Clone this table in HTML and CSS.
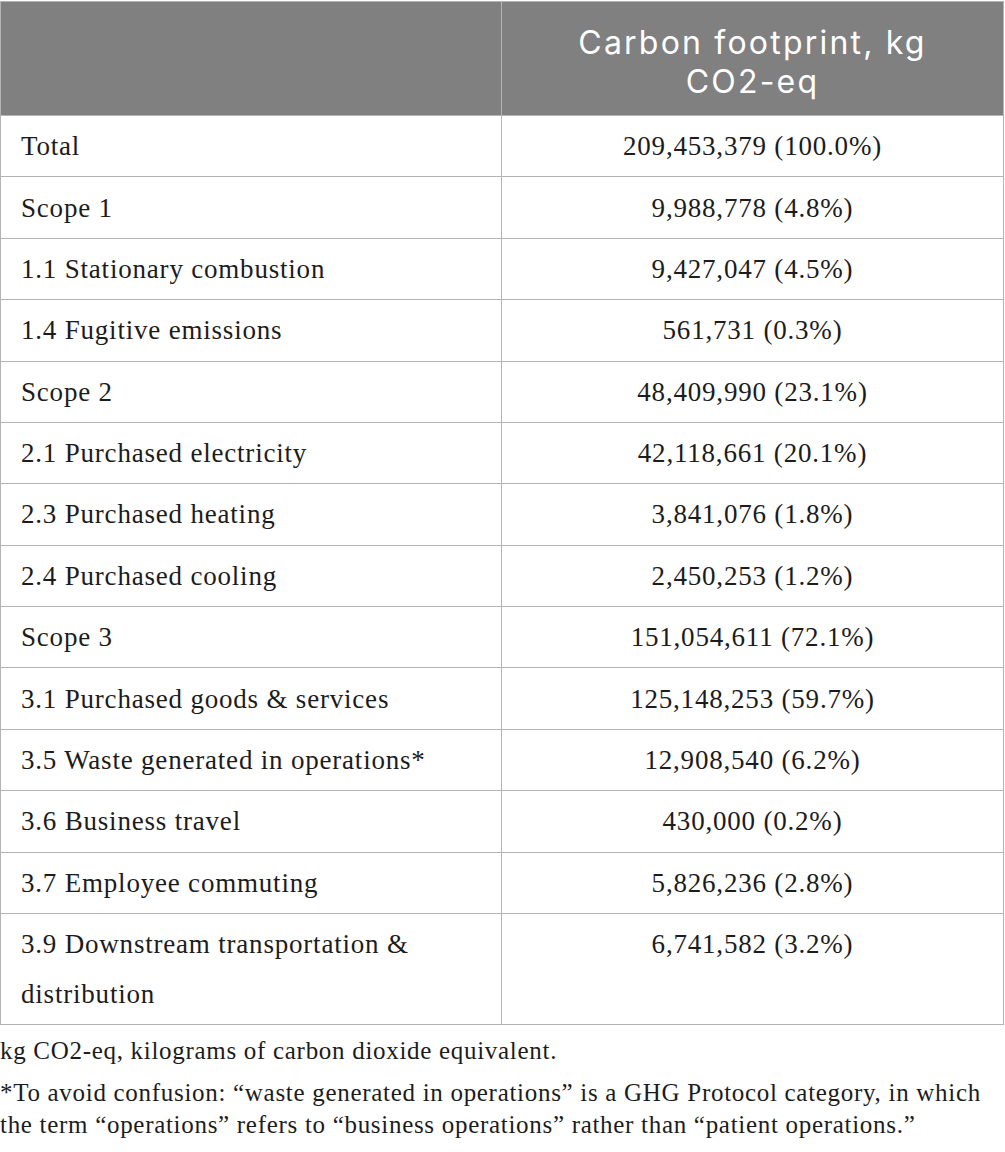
FILE: index.html
```html
<!DOCTYPE html>
<html>
<head>
<meta charset="utf-8">
<link rel="stylesheet" href="styles.css">
</head>
<body>
<table class="data">
  <thead>
    <tr>
      <th class="blank"></th>
      <th class="head">Carbon footprint, kg<br>CO2-eq</th>
    </tr>
  </thead>
  <tbody>
    <tr><td>Total</td><td class="num">209,453,379 (100.0%)</td></tr>
    <tr><td>Scope 1</td><td class="num">9,988,778 (4.8%)</td></tr>
    <tr><td>1.1 Stationary combustion</td><td class="num">9,427,047 (4.5%)</td></tr>
    <tr><td>1.4 Fugitive emissions</td><td class="num">561,731 (0.3%)</td></tr>
    <tr><td>Scope 2</td><td class="num">48,409,990 (23.1%)</td></tr>
    <tr><td>2.1 Purchased electricity</td><td class="num">42,118,661 (20.1%)</td></tr>
    <tr><td>2.3 Purchased heating</td><td class="num">3,841,076 (1.8%)</td></tr>
    <tr><td>2.4 Purchased cooling</td><td class="num">2,450,253 (1.2%)</td></tr>
    <tr><td>Scope 3</td><td class="num">151,054,611 (72.1%)</td></tr>
    <tr><td>3.1 Purchased goods &amp; services</td><td class="num">125,148,253 (59.7%)</td></tr>
    <tr><td>3.5 Waste generated in operations*</td><td class="num">12,908,540 (6.2%)</td></tr>
    <tr><td>3.6 Business travel</td><td class="num">430,000 (0.2%)</td></tr>
    <tr><td>3.7 Employee commuting</td><td class="num">5,826,236 (2.8%)</td></tr>
    <tr><td>3.9 Downstream transportation &amp;<br>distribution</td><td class="num">6,741,582 (3.2%)</td></tr>
  </tbody>
</table>
<div class="notes">
  <p class="note first">kg CO2-eq, kilograms of carbon dioxide equivalent.</p>
  <p class="note">*To avoid confusion: “waste generated in operations” is a GHG Protocol category, in which the term “operations” refers to “business operations” rather than “patient operations.”</p>
</div>
</body>
</html>
```

FILE: styles.css
```css
html, body {
  margin: 0;
  padding: 0;
  background: #ffffff;
}

body {
  font-family: "Liberation Serif", "Times New Roman", serif;
  color: #1c1c1c;
}

.data {
  border-collapse: collapse;
  width: 1004px;
  table-layout: fixed;
  margin-top: 1px;
}

.data th,
.data td {
  border: 1px solid #b4b4b4;
}

.data thead th {
  background: #7f807f;
  color: #ffffff;
  font-family: Inter, "Open Sans", sans-serif;
  font-weight: 400;
  font-size: 32px;
  letter-spacing: 2.2px;
  line-height: 39px;
  padding: 21px 10px 14px;
  text-align: center;
}

.data th.blank {
  width: 480px;
}

.data td {
  font-size: 27px;
  letter-spacing: 0.8px;
  line-height: 50px;
  padding: 5.2px 10px 5.2px 20px;
  vertical-align: top;
}

.data td.num {
  text-align: center;
  padding-left: 10px;
}

.notes {
  padding-top: 10px;
}

.note {
  margin: 0;
  font-size: 25px;
  letter-spacing: 0.7px;
  line-height: 32px;
}

.note.first {
  margin-bottom: 10px;
}
```
